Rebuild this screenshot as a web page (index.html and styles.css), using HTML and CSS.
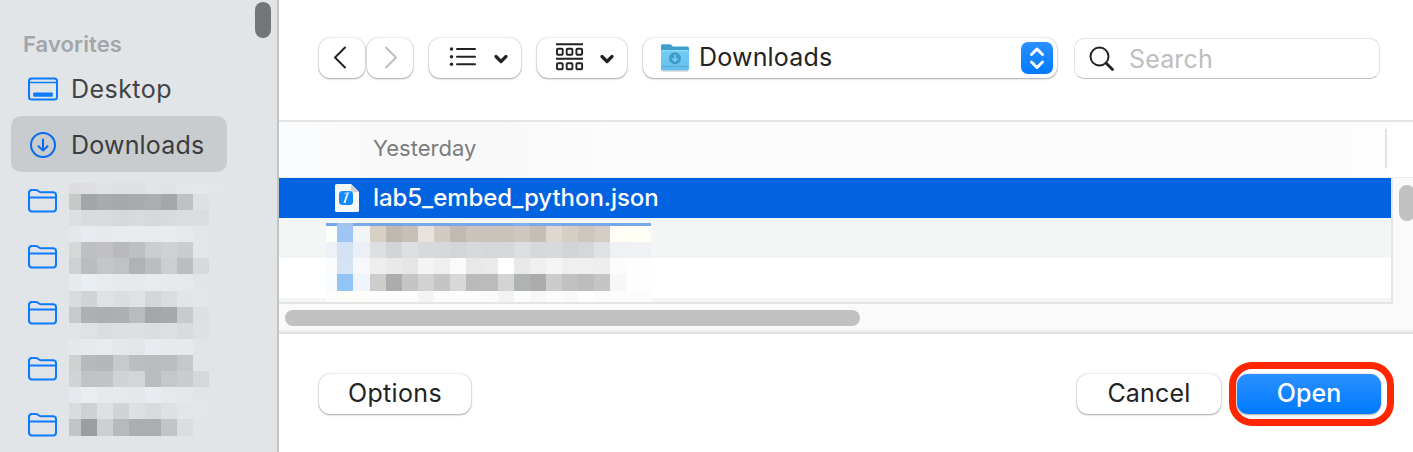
FILE: index.html
```
<!DOCTYPE html>
<html lang="en">
<head>
<meta charset="utf-8">
<title>Open</title>
<link rel="stylesheet" href="styles.css">
</head>
<body>
<svg width="0" height="0" class="defs">
  <symbol id="folder" viewBox="0 0 32 26"><path d="M2 20.500V5Q2 2 5 2H9Q10.500 2 11.500 3.200Q12.500 4.300 14 4.300H26Q29 4.300 29 7.300V20.500Q29 23.500 26 23.500H5Q2 23.500 2 20.500ZM2 9.500H29" fill="none" stroke="#0a7aff" stroke-width="2"/></symbol>
</svg>
<div class="dialog">
  <aside class="sidebar">
    <div class="side-thumb"></div>
    <h2 class="heading">Favorites</h2>
    <ul class="places">
      <li class="place"><svg class="icon" viewBox="0 0 32 26"><rect x="2" y="2.500" width="28" height="21" rx="2.500" fill="none" stroke="#0a7aff" stroke-width="2"/><path d="M2 6.500H30" stroke="#0a7aff" stroke-width="1.500"/><rect x="6.200" y="16.500" width="19.600" height="4.200" rx="1" fill="#0a7aff"/></svg><span class="t-desktop">Desktop</span></li>
      <li class="place selected"><svg class="icon" viewBox="0 0 32 26"><g fill="none" stroke="#066bf0" stroke-width="2" stroke-linecap="round" stroke-linejoin="round"><circle cx="16" cy="13" r="12"/><path d="M16 7.500V18.500M11.500 14.200L16 18.600L20.500 14.200"/></g></svg><span class="t-downloads">Downloads</span></li>
      <li class="place"><svg class="icon"><use href="#folder"/></svg></li>
      <li class="place"><svg class="icon"><use href="#folder"/></svg></li>
      <li class="place"><svg class="icon"><use href="#folder"/></svg></li>
      <li class="place"><svg class="icon"><use href="#folder"/></svg></li>
      <li class="place"><svg class="icon"><use href="#folder"/></svg></li>
    </ul>
    <svg class="mosaic side-mosaic" id="sideMosaic" width="156" height="253"></svg>
  </aside>
  <main class="main">
    <header class="toolbar">
      <button class="btn nav"><svg width="46" height="40"><path d="M26 9.500L16 19.500L26 29.500" class="line"/></svg></button>
      <button class="btn nav forward"><svg width="46" height="40"><path d="M19 9.500L29 19.500L19 29.500" class="line pale"/></svg></button>
      <button class="btn view-list"><svg width="92" height="40"><g fill="#222"><circle cx="22.500" cy="11" r="1.700"/><circle cx="22.500" cy="18.700" r="1.700"/><circle cx="22.500" cy="26.300" r="1.700"/></g><path d="M28 11H46M28 18.700H46M28 26.300H46" class="line"/><path d="M67 18.500L72 23.500L77 18.500" class="chev"/></svg></button>
      <button class="btn view-group"><svg width="90" height="40"><path d="M19 6.200H46M19 20.800H46" fill="none" stroke="#222" stroke-width="2"/><g fill="none" stroke="#222" stroke-width="1.900"><rect x="20" y="10.700" width="5.700" height="6" rx="1"/><rect x="29.700" y="10.700" width="5.700" height="6" rx="1"/><rect x="39.400" y="10.700" width="5.700" height="6" rx="1"/><rect x="20" y="25.300" width="5.700" height="6" rx="1"/><rect x="29.700" y="25.300" width="5.700" height="6" rx="1"/><rect x="39.400" y="25.300" width="5.700" height="6" rx="1"/></g><path d="M65 18.500L70 23.500L75 18.500" class="chev"/></svg></button>
      <button class="btn location">
        <svg width="30" height="30" viewBox="0 0 30 30"><defs><linearGradient id="fg" x2="0" y2="1"><stop stop-color="#75cdf5"/><stop offset="1" stop-color="#65bdec"/></linearGradient></defs><path d="M1 3Q1 1.300 2.500 1.300H9.500Q11 1.300 12 2.500L12.800 3.500H27.500Q29 3.500 29 5V12H1Z" fill="#3d9fcd"/><rect x="1" y="7" width="28" height="20.500" rx="1.500" fill="url(#fg)"/><path d="M1.500 7.500H28.500" stroke="#91dcfb"/><path d="M1.500 23.500H28.500" stroke="#56add9"/><path d="M2 28H28" stroke="#b7c4ca"/><circle cx="15" cy="15.200" r="6" fill="#3c9dcc"/><path d="M15 11.800V18M12.300 15.500L15 18.200L17.700 15.500" fill="none" stroke="#7dcef3" stroke-width="1.600"/></svg>
        <span class="t-location">Downloads</span>
        <svg class="stepper" width="32" height="32"><defs><linearGradient id="bg" x2="0" y2="1"><stop stop-color="#2b90ff"/><stop offset="1" stop-color="#007aff"/></linearGradient></defs><rect width="32" height="32" rx="7" fill="url(#bg)"/><path d="M10.500 12.500L16 7L21.500 12.500M10.500 20L16 25.500L21.500 20" fill="none" stroke="#fff" stroke-width="2.900" stroke-linecap="round" stroke-linejoin="round"/></svg>
      </button>
      <label class="search"><svg width="26" height="26"><circle cx="10.500" cy="10.500" r="9" class="line"/><path d="M17 17L23.500 23.500" stroke="#222" stroke-width="2.800" stroke-linecap="round"/></svg><span class="t-search">Search</span></label>
    </header>
    <section class="files">
      <div class="group"><span class="t-yesterday">Yesterday</span><i class="divider"></i></div>
      <div class="body">
        <div class="list">
          <div class="row active"><svg width="26" height="30" viewBox="0 0 26 30"><path d="M1 2.500Q1 1 2.500 1H17L25 9V27.500Q25 29 23.500 29H2.500Q1 29 1 27.500Z" fill="#f7f7f7"/><path d="M17 1L25 9H18.500Q17 9 17 7.500Z" fill="#d2d2d4"/><rect x="5" y="8" width="14" height="14" rx="3.500" fill="#1389fb"/><path d="M13.800 9.500L10.500 20" stroke="#e4f0ff" stroke-width="2"/><path d="M10 10.300L15.500 9.700" stroke="#9bcafa" stroke-width="1"/></svg><span class="t-file">lab5_embed_python.json</span></div>
          <div class="row alt"></div>
          <div class="row"></div>
          <div class="row alt last"></div>
          <svg class="mosaic file-mosaic" id="fileMosaic" width="325" height="79"></svg>
        </div>
        <div class="vscroll"><i class="vthumb"></i></div>
      </div>
      <div class="hscroll"><i class="hthumb"></i></div>
    </section>
    <footer class="footer">
      <button class="btn options"><span class="t-options">Options</span></button>
      <button class="btn cancel"><span class="t-cancel">Cancel</span></button>
      <div class="ring"><button class="btn open"><span class="t-open">Open</span></button></div>
    </footer>
  </main>
</div>
<script src="mosaic.js"></script>
</body>
</html>
```
FILE: styles.css
```
* { box-sizing: border-box; }
body { margin: 0; background: #fff; font-family: Inter, "Liberation Sans", sans-serif; font-size: 25px; color: #232323; overflow: hidden; }
button { font: inherit; color: inherit; padding: 0; }
svg { display: block; flex: none; }
span { white-space: nowrap; }
.defs { position: absolute; }
.dialog { display: flex; width: 1413px; height: 452px; overflow: hidden; }

.sidebar { position: relative; width: 279px; flex: none; padding: 29px 50px 0 11px; background: #e2e5e8; border-right: 2px solid #c1c3c5; }
.side-thumb { position: absolute; left: 255px; top: 2px; width: 16px; height: 36px; border-radius: 8px; background: #747577; }
.heading { margin: 0; padding-left: 12px; height: 31px; line-height: 31px; font-size: 22px; font-weight: 600; letter-spacing: .1px; color: #a3a6a9; }
.places { margin: 0; padding: 0; list-style: none; }
.place { display: flex; align-items: center; gap: 12px; height: 56px; width: 216px; padding: 2px 0 0 16px; border-radius: 10px; color: #414345; }
.place.selected { background: #c9cccf; color: #3a3c3e; }
.icon { width: 32px; height: 26px; overflow: visible; }
.t-desktop { letter-spacing: .45px; }
.t-downloads { letter-spacing: .2px; }
.mosaic { position: absolute; }
.side-mosaic { left: 69px; top: 183px; }

.main { display: flex; flex-direction: column; width: 1134px; flex: none; }
.toolbar { display: flex; align-items: flex-start; height: 122px; padding: 38px 0 0 40px; border-bottom: 2px solid #e5e5e5; }
.btn { display: flex; align-items: center; justify-content: center; height: 40px; border: 0; border-radius: 11px; background: #fff; box-shadow: 0 0 1.500px rgba(0,0,0,.3), 0 1px 2px rgba(0,0,0,.3); flex: none; }
.nav { width: 46px; }
.forward { margin-left: 2px; }
.view-list { width: 92px; margin-left: 16px; }
.view-group { width: 90px; margin-left: 16px; }
.location { width: 414px; margin-left: 16px; justify-content: flex-start; padding: 0 4px 0 17px; gap: 9px; }
.t-location { letter-spacing: .2px; padding-bottom: 2px; }
.stepper { margin-left: auto; }
.search { display: flex; align-items: center; gap: 14px; width: 306px; height: 41px; margin-left: 17px; padding-left: 14px; border: 1px solid #e3e3e3; border-bottom-color: #bcbcbc; border-radius: 10px; color: #bebebe; }
.t-search { letter-spacing: .15px; }
.line { fill: none; stroke: #222; stroke-width: 2; stroke-linecap: round; stroke-linejoin: round; }
.pale { stroke: #bdbdbd; }
.chev { fill: none; stroke: #222; stroke-width: 3.200; stroke-linecap: round; stroke-linejoin: round; }

.group { display: flex; align-items: center; justify-content: space-between; height: 56px; padding: 0 26px 3px 94px; font-size: 22px; color: #7c7c7c; background: linear-gradient(90deg, #fbfdff 0, #f9f9f9 90px, #f9f9f9 230px, #fcfcfc 340px, #fdfdfd 1110px, #fff 1112px); border-bottom: 1px solid #ececec; }
.divider { width: 2px; height: 39px; background: #e3e3e3; }
.body { display: flex; }
.list { position: relative; width: 1114px; height: 126px; border-right: 2px solid #e5e5e5; border-bottom: 2px solid #e5e5e5; }
.row { height: 40px; background: #fff; }
.alt { background: #f4f5f5; }
.last { height: 4px; }
.active { display: flex; align-items: center; gap: 13px; padding-left: 55px; background: #0263e1; color: #fff; font-size: 24px; font-weight: 500; }
.t-file { letter-spacing: -.06px; padding-bottom: 2px; }
.file-mosaic { left: 47px; top: 45px; }
.vscroll { width: 20px; padding: 7px 0 0 6px; background: #fafafa; overflow: hidden; }
.vthumb { display: block; width: 16px; height: 36px; border-radius: 8px; background: #c1c1c1; }
.hscroll { height: 30px; padding: 6px 0 0 6px; background: #fafafa; border-bottom: 2px solid #e2e2e2; box-shadow: inset 0 -2px #eee; }
.hthumb { display: block; width: 575px; height: 16px; border-radius: 8px; background: #c1c1c1; }

.footer { display: flex; align-items: flex-start; padding: 28px 0 0 40px; }
.footer .btn { padding-bottom: 2px; }
.options { width: 152px; margin-top: 12px; letter-spacing: .35px; }
.cancel { width: 144px; margin: 12px 0 0 606px; letter-spacing: .2px; }
.ring { width: 165px; height: 64px; margin-left: 8px; padding: 5px 0 0 1px; border: 7px solid #ff2600; border-radius: 23px; }
.open { width: 144px; background: linear-gradient(#2b90ff, #007aff); color: #fff; font-weight: 500; letter-spacing: .1px; }
```
FILE: mosaic.js
```
// Paints a grid of flat cells; each row string holds space separated hex colours ("-" leaves a gap).
function paint(id, xs, ys, rows) {
  var svg = document.getElementById(id);
  rows.forEach(function (row, r) {
    row.split(' ').forEach(function (c, i) {
      if (c === '-') return;
      var el = document.createElementNS('http://www.w3.org/2000/svg', 'rect');
      el.setAttribute('x', xs[i] - xs[0]);
      el.setAttribute('y', ys[r] - ys[0]);
      el.setAttribute('width', xs[i + 1] - xs[i]);
      el.setAttribute('height', ys[r + 1] - ys[r]);
      el.setAttribute('fill', '#' + c);
      el.setAttribute('shape-rendering', 'crispEdges');
      svg.appendChild(el);
    });
  });
}
paint('sideMosaic', [69, 81, 97, 113, 129, 145, 161, 177, 193, 209, 225],
  [183, 194, 210, 226, 242, 258, 274, 291, 307, 323, 339, 355, 371, 387, 403, 419, 436], [
  'dddddf dddfe0 e0e3e5 dee1e3 dee1e3 e3e4e7 e0e3e5 e2e6e8 e4e8eb e3e6e9',
  'c7c8c8 a4a5a8 a9aaac a7a8aa a9aaac acadaf a5a6a9 bec2c4 dee1e4 -',
  'dde0e3 dadbde d8dbdd d6d9db d8dbdd d6d9db d8dadc dbdcdf dadde0 -',
  'e4e8eb e8ecf0 e6eaed e7ebee e8ecef e7ebee e8ecef e6eaed e2e6e9 -',
  'd6d8d7 bbc0c3 c1c1c5 b7b9bb bbc0c3 cccdd1 ced2d5 cbccd0 e2e6e9 -',
  'cfd0d2 b9bdc0 c3c7ca bfc3c6 afb3b6 babec1 cbcfd2 babec1 d7dadd -',
  'e6eaed e9eef3 e7ebee e5e9ec e5e9ec e7ebee e6eaed e5e9ec e1e5e8 -',
  'dadbdd d0d4d6 dfe2e5 dbdee0 dfe2e5 d4d5d9 dadde0 e2e5e8 e3e6e9 -',
  'c8c9ca adb1b4 adaeb0 aeafb1 b8bcbf a3a7aa a7a8aa c7cbce dde0e3 -',
  'e1e4e6 dfe2e4 dadde0 dcdfe1 dce0e2 dadee0 dce0e2 d9dcdf dde1e3 -',
  'e4e8eb e6eaed e7ebee e4e8eb e2e6e9 e8ecf0 e6eaed e6eaed e2e5e8 -',
  'cfd1d0 b5b9bc b3b7ba c8c9cd babec1 b8bcbf babec1 c6c7cb e2e5e8 e1e4e7',
  'd1d3d5 bfc3c6 c2c3c7 d0d4d7 d2d6d9 b9bdc0 c6c7cb cbccd0 d4d8db -',
  'e5e9ef e9edf0 e6e8eb e6e9ec e4e8eb e8ecf0 e6e9ec e4e8eb e2e5e8 -',
  'dadbdd cdd1d4 dfe0e4 d0d4d7 dce0e3 d7dbde dfe0e3 e3e6e9 e3e6e9 -',
  'c3c4c5 9c9da1 ccd0d3 b8b9bc acadaf acadaf c1c5c8 dadee1 - -'
]);
paint('fileMosaic', [326, 337, 353, 370, 386, 402, 418, 434, 450, 466, 482, 498, 514, 530, 546, 562, 578, 594, 610, 626, 651],
  [223, 226, 242, 258, 274, 291, 302], [
  '76a6eb a2c2e9 7ba9e9 74a4e7 74a4e7 78a9ed 78a9ed 75a5e8 78a9ed 76a6eb 76a6eb 76a6eb 7eaff3 78a9ed 78a9ed 76a6eb 76a6eb 76a6eb 76a6eb 76a6eb',
  'fbfff8 9dc6f6 f2f5f5 d8cfc5 bfb9b0 c6bfb5 e8e2dc d1cbc3 c1bab3 cbc4bc cbc4bc cac3ba cec7bf c5beb4 ded8d0 d5cfc3 ccc6bc d4cdc5 fffdf5 fffff6',
  'edf2f7 d4e3f3 ebf0f6 dddfe1 d2d4d7 dddfe1 d7d9db d6d8da d3d5d7 d7d9db d5d7d9 d6d8da dcdee0 d6d8da d7d9db d2d4d7 d5d7d9 dfe1e3 eff1f4 eff1f4',
  'fafcfe d4e4f4 f6f8fb eeeeec e9e9e9 e6e6e6 f4f4f4 efefef fafafa e8e8e8 eaeaea ffffff e8e8e8 efefef f5f5f5 efefef efefef eeeeee fcfcfc fefefe',
  'f8fcff 93c4f7 eff4fd cecdcb acacad c5c5c5 d2d2d2 c5c5c5 d8d8d8 b9baba bbbbbb d4d4d4 afb3b2 ababab cccccc c1c1c1 bdbdbd c5c5c5 f7f7f7 fefefe',
  'fcfdfe fffef6 fdfcfa fdfdfd fdfdfd fdfdfd f2f5f4 fbfcfc fdfdfd fcfcfc f9fafa f1f4f3 fbfefd f6f7f6 fcfcfc f8faf9 fefefe fafbfb fcfcfc fcfcfc'
]);
```
